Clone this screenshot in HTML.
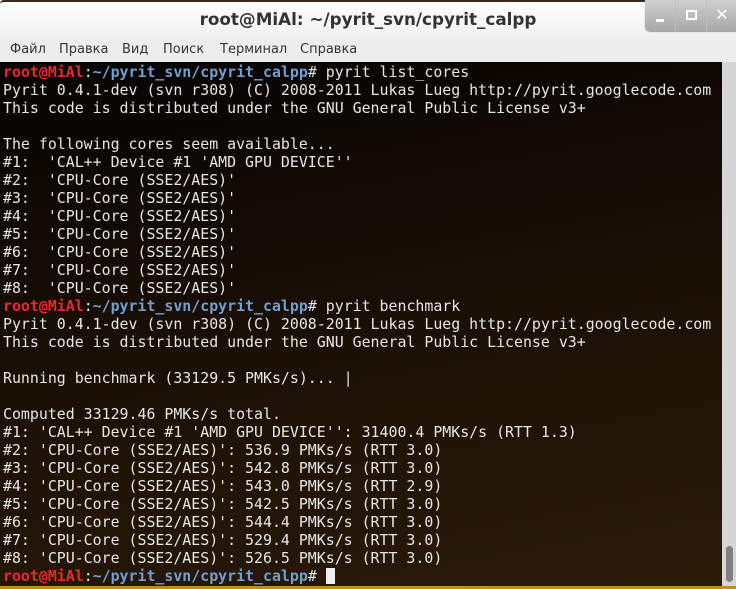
<!DOCTYPE html>
<html><head><meta charset="utf-8"><style>
body{margin:0;width:736px;height:589px;overflow:hidden;background:#ededed;font-family:"Liberation Sans","DejaVu Sans",sans-serif;position:relative}
.title{position:absolute;left:0;top:0;width:736px;height:38px;background:linear-gradient(#fff,#f0f0f0);border-top:2px solid #3a2a1a;box-sizing:border-box;border-radius:4px 4px 0 0}
.title .t{position:absolute;left:0;width:736px;top:7px;text-align:center;font-weight:bold;font-size:16.8px;color:#333;font-family:"DejaVu Sans",sans-serif}
.btns{position:absolute;left:645px;top:0;width:91px;height:31px;background:linear-gradient(#cfcfcf,#a9a9a9);border-radius:0 0 0 5px;box-shadow:0 1px 1px #999}
.btns div{position:absolute;top:0;height:31px;width:30px;border-left:1px solid #bdbdbd;color:#fff;font-weight:bold;text-align:center;font-size:16px;line-height:31px}
.menu{position:absolute;top:38px;left:0;height:24px;width:736px;background:#ededed;font-size:13px;color:#333;font-family:"DejaVu Sans",sans-serif}
.menu span{position:absolute;top:4px}
.term{position:absolute;left:0;top:62px;width:722px;height:524px;background:linear-gradient(170deg,#060302 0%,#120a04 30%,#1e1206 60%,#2a1a08 100%)}
pre{margin:0;position:absolute;left:3px;top:1px;font-family:"DejaVu Sans Mono","Liberation Mono",monospace;font-size:14.9px;line-height:18px;color:#e6e6e6}
.r{color:#ef2929;font-weight:bold}.b{color:#729fcf;font-weight:bold}
.sb{position:absolute;left:722px;top:62px;width:14px;height:524px;background:#d6d6d6}
.th{position:absolute;left:726px;top:546px;width:7px;height:36px;background:#7f7f7f;border-radius:4px}
.bot{position:absolute;left:0;top:586px;width:736px;height:3px;background:#c88a1e}
.cur{display:inline-block;width:9px;height:16px;background:#eee;vertical-align:-3px}
</style></head><body>
<div class="title"><div class="t">root@MiAl: ~/pyrit_svn/cpyrit_calpp</div></div>
<div class="btns"><div style="left:0;border-left:none"><span style="display:inline-block;width:8px;height:3px;background:#fff;margin-top:19px;vertical-align:top"></span></div><div style="left:30px"><span style="display:inline-block;width:7px;height:6px;border:2px solid #fff;margin-top:10px;vertical-align:top"></span></div><div style="left:61px">✕</div></div>
<div class="menu"><span style="left:10px">Файл</span><span style="left:59px">Правка</span><span style="left:122px">Вид</span><span style="left:163px">Поиск</span><span style="left:220px">Терминал</span><span style="left:300px">Справка</span></div>
<div class="term"><pre><span class="r">root@MiAl</span>:<span class="b">~/pyrit_svn/cpyrit_calpp</span># pyrit list_cores
Pyrit 0.4.1-dev (svn r308) (C) 2008-2011 Lukas Lueg http://pyrit.googlecode.com
This code is distributed under the GNU General Public License v3+

The following cores seem available...
#1:  'CAL++ Device #1 'AMD GPU DEVICE''
#2:  'CPU-Core (SSE2/AES)'
#3:  'CPU-Core (SSE2/AES)'
#4:  'CPU-Core (SSE2/AES)'
#5:  'CPU-Core (SSE2/AES)'
#6:  'CPU-Core (SSE2/AES)'
#7:  'CPU-Core (SSE2/AES)'
#8:  'CPU-Core (SSE2/AES)'
<span class="r">root@MiAl</span>:<span class="b">~/pyrit_svn/cpyrit_calpp</span># pyrit benchmark
Pyrit 0.4.1-dev (svn r308) (C) 2008-2011 Lukas Lueg http://pyrit.googlecode.com
This code is distributed under the GNU General Public License v3+

Running benchmark (33129.5 PMKs/s)... |

Computed 33129.46 PMKs/s total.
#1: 'CAL++ Device #1 'AMD GPU DEVICE'': 31400.4 PMKs/s (RTT 1.3)
#2: 'CPU-Core (SSE2/AES)': 536.9 PMKs/s (RTT 3.0)
#3: 'CPU-Core (SSE2/AES)': 542.8 PMKs/s (RTT 3.0)
#4: 'CPU-Core (SSE2/AES)': 543.0 PMKs/s (RTT 2.9)
#5: 'CPU-Core (SSE2/AES)': 542.5 PMKs/s (RTT 3.0)
#6: 'CPU-Core (SSE2/AES)': 544.4 PMKs/s (RTT 3.0)
#7: 'CPU-Core (SSE2/AES)': 529.4 PMKs/s (RTT 3.0)
#8: 'CPU-Core (SSE2/AES)': 526.5 PMKs/s (RTT 3.0)
<span class="r">root@MiAl</span>:<span class="b">~/pyrit_svn/cpyrit_calpp</span># <span class="cur"></span></pre></div>
<div class="sb"></div><div class="th"></div><div class="bot"></div>
</body></html>
